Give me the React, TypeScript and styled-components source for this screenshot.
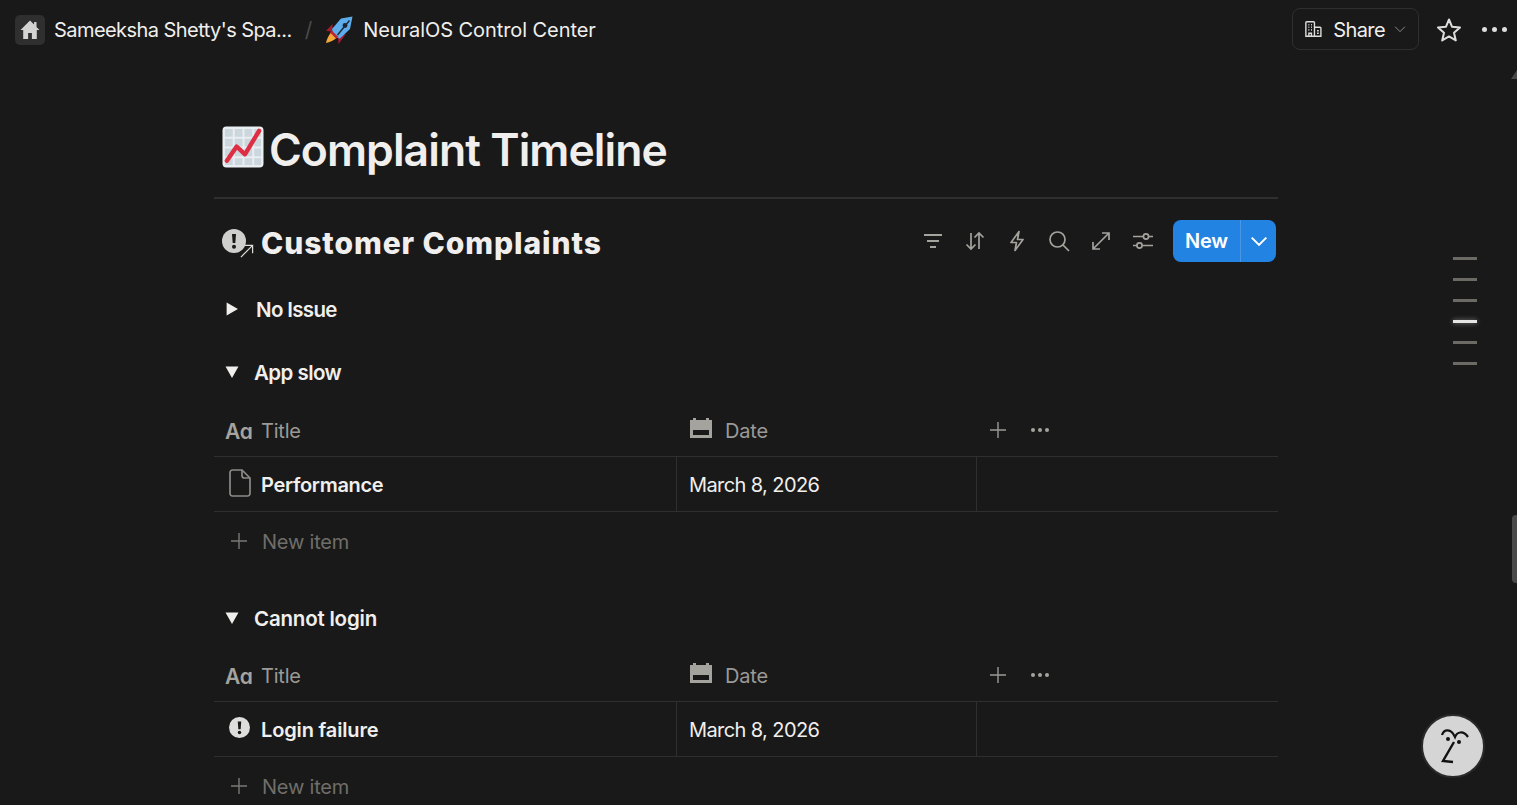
import React from 'react'
import styled, { createGlobalStyle } from 'styled-components'

const GlobalStyle = createGlobalStyle`
  html, body {
    margin: 0;
    height: 100%;
    background-color: #191919;
    overflow: hidden;
  }

  body {
    font-family: Inter, "Noto Sans", "Liberation Sans", sans-serif;
    color: #f0efed;
  }

  * {
    box-sizing: border-box;
  }
`

const Page = styled.div`
  position: relative;
  width: 1517px;
  height: 805px;
  overflow: hidden;
  background-color: #191919;
`

const TopBar = styled.header`
  display: flex;
  justify-content: space-between;
  align-items: center;
  height: 59px;
  padding: 0 10px 0 15px;
`

const Crumbs = styled.nav`
  display: flex;
  align-items: center;
  font-size: 20px;
`

const HomeBadge = styled.span`
  display: flex;
  align-items: center;
  justify-content: center;
  width: 30px;
  height: 30px;
  margin-right: 9px;
  border-radius: 5px;
  background-color: #2f2f2f;
`

const CrumbText = styled.span<{ $spacing: number }>`
  white-space: nowrap;
  letter-spacing: ${(p) => p.$spacing}px;
`

const Slash = styled.span`
  margin: 0 13px;
  color: #4a4a4a;
  font-size: 21px;
`

const RocketWrap = styled.span`
  display: flex;
  margin-right: 10px;
`

const Actions = styled.div`
  display: flex;
  align-items: center;
`

const ShareButton = styled.button`
  display: flex;
  align-items: center;
  width: 127px;
  height: 42px;
  margin: 0 17px 1px 0;
  padding: 0 12px;
  border: 1px solid #2f2f2f;
  border-radius: 8px;
  background: transparent;
  color: #f0efed;
  font: 400 20px Inter, sans-serif;
  letter-spacing: -0.6px;

  span {
    margin: 2px 9px 0 11px;
  }
`

const IconButton = styled.span<{ $gap?: number }>`
  display: flex;
  align-items: center;
  justify-content: center;
  margin-right: ${(p) => p.$gap ?? 0}px;
`

const Content = styled.main`
  width: 1064px;
  margin-left: 214px;
`

const TitleRow = styled.div`
  display: flex;
  align-items: center;
  height: 140px;
  padding: 38px 0 0 8px;
  border-bottom: 2px solid #2f2f2f;
`

const PageTitle = styled.h1`
  margin: 6px 0 0 5px;
  font-size: 44.5px;
  font-weight: 600;
  letter-spacing: -0.95px;
  line-height: 50px;
  color: #f0efed;
`

const ViewHeader = styled.div`
  display: flex;
  justify-content: space-between;
  align-items: center;
  height: 42px;
  margin-top: 21px;
  padding: 0 2px 0 8px;
`

const ViewName = styled.div`
  display: flex;
  align-items: center;
`

const LinkedIcon = styled.span`
  position: relative;
  display: flex;
  width: 39px;
`

const LinkArrow = styled.span`
  position: absolute;
  right: 7px;
  bottom: -5px;
  display: flex;
`

const ViewTitle = styled.h2`
  margin: 4px 0 0;
  font-size: 30px;
  font-weight: 800;
  letter-spacing: 0.92px;
`

const Toolbar = styled.div`
  display: flex;
  align-items: center;
`

const ToolIcon = styled.span`
  display: flex;
  align-items: center;
  justify-content: center;
  width: 42px;
  height: 42px;
`

const NewButton = styled.div`
  display: flex;
  height: 42px;
  margin-left: 9px;
  border-radius: 8px;
  overflow: hidden;
  background-color: #2383e2;
  color: #fff;
`

const NewLabel = styled.span`
  display: flex;
  align-items: center;
  width: 68px;
  padding-left: 12px;
  font-size: 20px;
  font-weight: 600;
  letter-spacing: -0.2px;
  border-right: 1px solid #4a97e6;
`

const NewCaret = styled.span`
  display: flex;
  align-items: center;
  justify-content: center;
  width: 35px;
`

const Group = styled.section<{ $top: number }>`
  margin-top: ${(p) => p.$top}px;
`

const GroupHead = styled.div<{ $gap: number; $spacing: number }>`
  display: flex;
  align-items: center;
  gap: ${(p) => p.$gap}px;
  height: 32px;
  padding-left: 11px;
  font-size: 20.5px;
  font-weight: 600;
  letter-spacing: ${(p) => p.$spacing}px;
`

const TableHead = styled.div<{ $top: number }>`
  display: grid;
  grid-template-columns: 463px 300px 1fr;
  align-items: center;
  height: 49px;
  margin-top: ${(p) => p.$top}px;
  padding-bottom: 2px;
  border-bottom: 1px solid #2f2f2f;
  color: #9b9a97;
  font-size: 20px;
  letter-spacing: -0.2px;
`

const HeadCell = styled.div`
  display: flex;
  align-items: center;
  height: 100%;
  padding-left: 11px;
`

const TitleGlyph = styled.span`
  width: 36px;
  color: #a5a39e;
  font-size: 21px;
  font-weight: 600;
  letter-spacing: -0.5px;
  line-height: 1;
`

const DateGlyph = styled.span`
  display: flex;
  width: 37px;
  margin-top: -6px;
  padding-left: 2px;
`

const AddCell = styled.div`
  display: flex;
  align-items: center;
  gap: 25px;
  margin-top: -2px;
  padding-left: 13px;
`

const Row = styled.div`
  display: grid;
  grid-template-columns: 463px 300px 1fr;
  height: 55px;
  border-bottom: 1px solid #2f2f2f;
  font-size: 20px;
`

const RowCell = styled.div`
  display: flex;
  align-items: center;
  padding: 2px 0 0 12px;
  border-right: 1px solid #2f2f2f;
  letter-spacing: -0.6px;

  &:last-child {
    border-right: none;
  }
`

const RowIcon = styled.span`
  display: flex;
  justify-content: center;
  width: 27px;
  margin: -5px 8px 0 0;
`

const RowTitle = styled.span<{ $spacing: number }>`
  font-weight: 600;
  letter-spacing: ${(p) => p.$spacing}px;
`

const NewItem = styled.div`
  display: flex;
  align-items: center;
  gap: 15px;
  height: 58px;
  padding: 2px 0 0 17px;
  color: #6f6e69;
  font-size: 20px;
  letter-spacing: -0.2px;

  svg {
    margin-top: -2px;
  }
`

const Outline = styled.div`
  position: absolute;
  top: 257px;
  right: 40px;
  display: flex;
  flex-direction: column;
  gap: 18px;
`

const OutlineBar = styled.span<{ $active?: boolean }>`
  display: block;
  width: 24px;
  height: 3px;
  background-color: ${(p) => (p.$active ? '#e6e6e4' : '#6b6a65')};
  box-shadow: ${(p) => (p.$active ? '0 0 5px rgba(255, 255, 255, 0.45)' : 'none')};
`

const ScrollArrow = styled.span`
  position: absolute;
  top: 70px;
  right: 0;
  width: 0;
  height: 0;
  border-left: 6px solid transparent;
  border-bottom: 9px solid #4a4a4a;
`

const ScrollThumb = styled.span`
  position: absolute;
  top: 515px;
  right: 0;
  width: 5px;
  height: 68px;
  border-radius: 4px 0 0 4px;
  background-color: #4a4a4a;
`

const HelpButton = styled.div`
  position: absolute;
  left: 1421px;
  top: 714px;
  display: flex;
  align-items: center;
  justify-content: center;
  width: 64px;
  height: 64px;
  border: 2px solid #2a2a2a;
  border-radius: 50%;
  background-color: #d5d5d5;
`

const HomeIcon = () => (
  <svg width="20" height="20" viewBox="0 0 20 20">
    <path
      d="M10 .5.5 10h2.700v9h4.900v-6h3.800v6h4.900v-9h2.700l-3-3V2h-2.400v2.600z"
      fill="#d4d4d2"
    />
  </svg>
)

const RocketIcon = () => (
  <svg width="28" height="28" viewBox="0 0 28 28">
    <path d="M7 15.500c-3 3-5.500 8-6 11.500 3.500-.5 8.500-3 11.500-6z" fill="#f4a83a" />
    <path d="M7.500 8 1 15l6.500.5zM21 18l-7.500 10-.5-7z" fill="#a51c30" />
    <path d="M27.500.5 16 2.500 7 13l2 8 6 1.500 10-9.500z" fill="#5dadec" />
    <path d="M6.500 14.500 13.500 21l-2.500 1.500-6-6z" fill="#c1232f" />
    <path d="M24.500 4.500 12.500 19" stroke="#1d2733" strokeWidth="1.400" fill="none" />
    <circle cx="20" cy="9.500" r="2.400" fill="#1d2733" />
  </svg>
)

const BuildingIcon = () => (
  <svg width="20" height="20" viewBox="0 0 20 20" fill="none" stroke="#e0dfdc" strokeWidth="1.600">
    <path d="M1 18.500V2.500A1 1 0 0 1 2 1.500h8a1 1 0 0 1 1 1v16z" />
    <path d="M11 8h6.500a1 1 0 0 1 1 1v9.500H11" />
    <path d="M4 5h1M7 5h1M4 8h1M7 8h1M4 11h1M7 11h1M14 12h2M14 15h2" strokeWidth="1.800" />
    <path d="M4.500 18.500V15h3v3.500" />
  </svg>
)

const Chevron = ({ color, size, width }: { color: string; size: number; width: number }) => (
  <svg width={size} height={size} viewBox="0 0 16 16" fill="none" stroke={color} strokeWidth={width}>
    <path d="M1.500 5 8 11.500 14.500 5" />
  </svg>
)

const StarIcon = () => (
  <svg width="26" height="26" viewBox="0 0 26 26" fill="none" stroke="#dededc" strokeWidth="2" strokeLinejoin="round">
    <path d="M13 2.500l3.100 7.300 7.900.7-6 5.200 1.800 7.700L13 19.400l-6.800 4 1.800-7.700-6-5.200 7.900-.7z" />
  </svg>
)

const Dots = ({ color, size, gap }: { color: string; size: number; gap: number }) => (
  <svg width={size * 3 + gap * 2} height={size} viewBox={`0 0 ${size * 3 + gap * 2} ${size}`} fill={color}>
    <circle cx={size / 2} cy={size / 2} r={size / 2} />
    <circle cx={size * 1.5 + gap} cy={size / 2} r={size / 2} />
    <circle cx={size * 2.5 + gap * 2} cy={size / 2} r={size / 2} />
  </svg>
)

const ChartEmoji = () => (
  <svg width="42" height="42" viewBox="0 0 43 43">
    <rect x=".5" y=".5" width="42" height="42" rx="4" fill="#e9eef2" />
    <path
      d="M3 3h8v8H3zM13 3h8v8h-8zM23 3h8v8h-8zM33 3h7v8h-7zM3 13h8v8H3zM13 13h8v8h-8zM23 13h8v8h-8zM33 13h7v8h-7zM3 23h8v8H3zM13 23h8v8h-8zM23 23h8v8h-8zM33 23h7v8h-7zM3 33h8v7H3zM13 33h8v7h-8zM23 33h8v7h-8zM33 33h7v7h-7z"
      fill="#ccd6dd"
    />
    <path d="M5 35.500 15 21l8.500 8L38 5" fill="none" stroke="#dd2e44" strokeWidth="4.500" strokeLinecap="round" strokeLinejoin="round" />
  </svg>
)

const AlertIcon = ({ size, fill }: { size: number; fill: string }) => (
  <svg width={size} height={size} viewBox="0 0 24 24">
    <circle cx="12" cy="12" r="12" fill={fill} />
    <path d="M10 5h4l-.7 9h-2.600z" fill="#191919" />
    <circle cx="12" cy="17.800" r="2" fill="#191919" />
  </svg>
)

const ToolSvg = ({ children }: { children: React.ReactNode }) => (
  <svg width="22" height="22" viewBox="0 0 22 22" fill="none" stroke="#a5a39e" strokeWidth="1.700">
    {children}
  </svg>
)

const AddIcon = ({ color, size }: { color: string; size: number }) => (
  <svg width={size} height={size} viewBox="0 0 16 16" fill="none" stroke={color} strokeWidth="1.400">
    <path d="M8 0v16M0 8h16" />
  </svg>
)

const CalendarIcon = () => (
  <svg width="22" height="20" viewBox="0 0 22 20">
    <path
      fillRule="evenodd"
      d="M0 2h3V0h3v2h10V0h3v2h3v18H0zM3 12v5h16v-5z"
      fill="#a5a39e"
    />
  </svg>
)

const DocIcon = () => (
  <svg width="22" height="28" viewBox="0 0 22 28" fill="none" stroke="#8c8b87" strokeWidth="1.700">
    <path d="M3.500 1h9.500L21 9v15.500a2.500 2.500 0 0 1-2.500 2.500h-15A2.500 2.500 0 0 1 1 24.500v-21A2.500 2.500 0 0 1 3.500 1z" />
    <path d="M13 1v5.500A2.500 2.500 0 0 0 15.500 9H21" />
  </svg>
)

const Toggle = ({ open }: { open: boolean }) => (
  <svg width="14" height="14" viewBox="0 0 13 13" fill="#f0efed">
    {open ? <path d="M.5 1.500h12L6.500 12z" /> : <path d="M1.500.5v12L12 6.500z" />}
  </svg>
)

const TableHeader = ({ top }: { top: number }) => (
  <TableHead $top={top}>
    <HeadCell>
      <TitleGlyph>Aɑ</TitleGlyph>
      Title
    </HeadCell>
    <HeadCell>
      <DateGlyph>
        <CalendarIcon />
      </DateGlyph>
      Date
    </HeadCell>
    <AddCell>
      <AddIcon color="#9b9a97" size={16} />
      <Dots color="#a5a39e" size={4} gap={3} />
    </AddCell>
  </TableHead>
)

const FaceIcon = () => (
  <svg width="32" height="38" viewBox="0 0 32 38" fill="none" stroke="#111" strokeWidth="2.200">
    <path d="M5 8c2-6 9-7 13 2 2-5 8-7 13 0" />
    <circle cx="11" cy="12" r="2" fill="#111" stroke="none" />
    <circle cx="22" cy="15" r="2" fill="#111" stroke="none" />
    <path d="M17 15 6 34l10 1" strokeWidth="2.400" />
  </svg>
)

const outlineBars = [false, false, false, true, false, false]

function App() {
  return (
    <Page>
      <GlobalStyle />
      <TopBar>
        <Crumbs>
          <HomeBadge>
            <HomeIcon />
          </HomeBadge>
          <CrumbText $spacing={-0.56}>Sameeksha Shetty's Spa...</CrumbText>
          <Slash>/</Slash>
          <RocketWrap>
            <RocketIcon />
          </RocketWrap>
          <CrumbText $spacing={-0.07}>NeuralOS Control Center</CrumbText>
        </Crumbs>
        <Actions>
          <ShareButton>
            <BuildingIcon />
            <span>Share</span>
            <Chevron color="#8c8b87" size={14} width={1.3} />
          </ShareButton>
          <IconButton $gap={20}>
            <StarIcon />
          </IconButton>
          <IconButton>
            <Dots color="#dededc" size={5} gap={5} />
          </IconButton>
        </Actions>
      </TopBar>

      <Content>
        <TitleRow>
          <ChartEmoji />
          <PageTitle>Complaint Timeline</PageTitle>
        </TitleRow>

        <ViewHeader>
          <ViewName>
            <LinkedIcon>
              <AlertIcon size={24} fill="#cfcfcd" />
              <LinkArrow>
                <svg width="14" height="14" viewBox="0 0 15 15" fill="none" stroke="#dededc" strokeWidth="1.300">
                  <path d="M1 14 13.500 1.500M5 1.500h8.500V10" />
                </svg>
              </LinkArrow>
            </LinkedIcon>
            <ViewTitle>Customer Complaints</ViewTitle>
          </ViewName>
          <Toolbar>
            <ToolIcon>
              <ToolSvg>
                <path d="M2 5h18M5 11h12M8 17h6" strokeWidth="2" />
              </ToolSvg>
            </ToolIcon>
            <ToolIcon>
              <ToolSvg>
                <path d="M7 3v16M2.500 14.500 7 19l4.500-4.500M15 19V3M10.500 7.500 15 3l4.500 4.500" />
              </ToolSvg>
            </ToolIcon>
            <ToolIcon>
              <ToolSvg>
                <path d="M13 1.500 5 12.500h5.500L9 20.500l8-11h-5.500z" strokeLinejoin="round" />
              </ToolSvg>
            </ToolIcon>
            <ToolIcon>
              <ToolSvg>
                <circle cx="9.500" cy="9.500" r="7.500" />
                <path d="m15 15 6 6" />
              </ToolSvg>
            </ToolIcon>
            <ToolIcon>
              <ToolSvg>
                <path d="M3 19 19 3M12 3h7v7M3 12v7h7" />
              </ToolSvg>
            </ToolIcon>
            <ToolIcon>
              <ToolSvg>
                <path d="M1 6.500h10.500M17 6.500h4M1 15.500h4M10.500 15.500H21" />
                <circle cx="14" cy="6.500" r="2.600" />
                <circle cx="7.500" cy="15.500" r="2.600" />
              </ToolSvg>
            </ToolIcon>
            <NewButton>
              <NewLabel>New</NewLabel>
              <NewCaret>
                <Chevron color="#ffffff" size={18} width={1.8} />
              </NewCaret>
            </NewButton>
          </Toolbar>
        </ViewHeader>

        <Group $top={31}>
          <GroupHead $gap={17} $spacing={-0.67}>
            <Toggle open={false} />
            No Issue
          </GroupHead>
        </Group>

        <Group $top={31}>
          <GroupHead $gap={15} $spacing={-0.55}>
            <Toggle open />
            App slow
          </GroupHead>
          <TableHeader top={20} />
          <Row>
            <RowCell>
              <RowIcon>
                <DocIcon />
              </RowIcon>
              <RowTitle $spacing={-0.3}>Performance</RowTitle>
            </RowCell>
            <RowCell>March 8, 2026</RowCell>
            <RowCell />
          </Row>
          <NewItem>
            <AddIcon color="#7a7974" size={16} />
            New item
          </NewItem>
        </Group>

        <Group $top={32}>
          <GroupHead $gap={15} $spacing={-0.2}>
            <Toggle open />
            Cannot login
          </GroupHead>
          <TableHeader top={19} />
          <Row>
            <RowCell>
              <RowIcon>
                <AlertIcon size={21} fill="#dededc" />
              </RowIcon>
              <RowTitle $spacing={-0.15}>Login failure</RowTitle>
            </RowCell>
            <RowCell>March 8, 2026</RowCell>
            <RowCell />
          </Row>
          <NewItem>
            <AddIcon color="#7a7974" size={16} />
            New item
          </NewItem>
        </Group>
      </Content>

      <Outline>
        {outlineBars.map((active, i) => (
          <OutlineBar key={i} $active={active} />
        ))}
      </Outline>
      <ScrollArrow />
      <ScrollThumb />
      <HelpButton>
        <FaceIcon />
      </HelpButton>
    </Page>
  )
}

export default App
